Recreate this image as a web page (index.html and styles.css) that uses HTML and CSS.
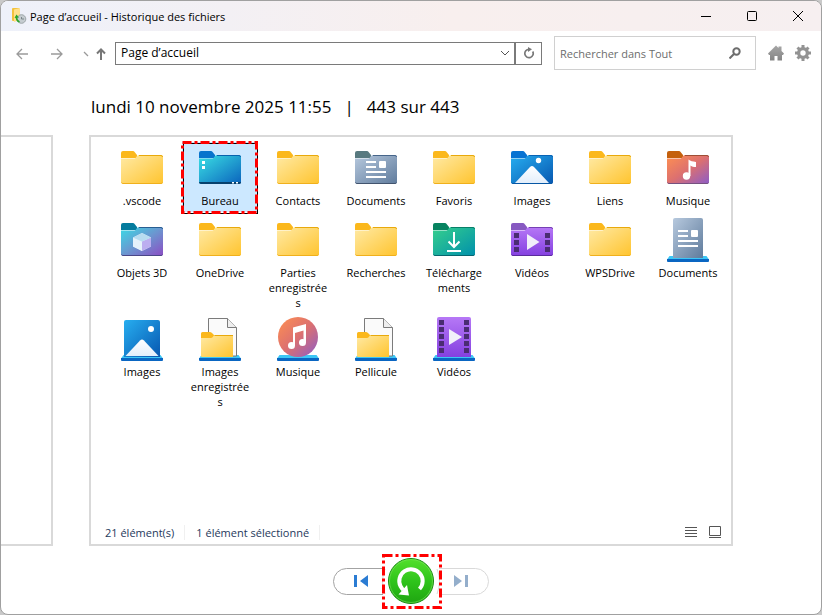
FILE: index.html
```html
<!DOCTYPE html>
<html lang="fr">
<head>
<meta charset="utf-8">
<meta name="viewport" content="width=device-width, initial-scale=1">
<title>Page d'accueil - Historique des fichiers</title>
<link rel="stylesheet" href="styles.css">
</head>
<body>
<svg class="defs" aria-hidden="true">
  <defs>
    <linearGradient id="g-yellow" x1="0" y1="0" x2="1" y2="1"><stop offset="0" stop-color="#ffeaa6"/><stop offset="1" stop-color="#ffc42e"/></linearGradient>
    <linearGradient id="g-desk" x1="0" y1="0" x2="1" y2="1"><stop offset="0" stop-color="#3be0e4"/><stop offset="1" stop-color="#0a63bd"/></linearGradient>
    <linearGradient id="g-slate" x1="0" y1="0" x2="1" y2="1"><stop offset="0" stop-color="#b7c9de"/><stop offset="1" stop-color="#5f7b9c"/></linearGradient>
    <linearGradient id="g-blue" x1="0" y1="0" x2="1" y2="1"><stop offset="0" stop-color="#27aef0"/><stop offset="1" stop-color="#0757b0"/></linearGradient>
    <linearGradient id="g-music" x1="0" y1="0" x2="1" y2="1"><stop offset="0" stop-color="#ff9050"/><stop offset=".5" stop-color="#dc7070"/><stop offset="1" stop-color="#8c5cc8"/></linearGradient>
    <linearGradient id="g-3d" x1="0" y1="0" x2="1" y2="1"><stop offset="0" stop-color="#38dce6"/><stop offset=".5" stop-color="#6b97d0"/><stop offset="1" stop-color="#8c4cc4"/></linearGradient>
    <linearGradient id="g-green" x1="0" y1="0" x2="1" y2="1"><stop offset="0" stop-color="#36d08c"/><stop offset="1" stop-color="#0090ac"/></linearGradient>
    <linearGradient id="g-violet" x1="0" y1="0" x2="0" y2="1"><stop offset="0" stop-color="#b678f6"/><stop offset="1" stop-color="#8440e0"/></linearGradient>
    <linearGradient id="g-white" x1="0" y1="0" x2="0" y2="1"><stop offset="0" stop-color="#fff"/><stop offset="1" stop-color="#e2eefb"/></linearGradient>
    <linearGradient id="g-go" x1="0" y1="0" x2="0" y2="1"><stop offset="0" stop-color="#53e02c"/><stop offset=".5" stop-color="#2fc41b"/><stop offset="1" stop-color="#1fa511"/></linearGradient>
    <linearGradient id="g-gray" x1="0" y1="0" x2="0" y2="1"><stop offset="0" stop-color="#a6a6a6"/><stop offset="1" stop-color="#858585"/></linearGradient>

    <path id="tab" d="M3 14V9a2 2 0 0 1 2-2h9c1.500 0 2.300.4 3 1.500L19 11v3z"/>
    <path id="front" d="M3 14.500h12.500c1.500 0 2-.5 2.800-1.500s1.200-2 2.700-2H43a2 2 0 0 1 2 2v25a2 2 0 0 1-2 2H5a2 2 0 0 1-2-2z"/>
    <path id="rim" d="M21 11.500h22a1.500 1.500 0 0 1 1.500 1.500" fill="none"/>
    <path id="foot" d="M3.500 38.500q.5 1 1.500 1h38q1 0 1.500-1" fill="none"/>
    <g id="base"><path d="M5.500 40h37L45 43.500v.5H3v-.5z" fill="#3cc6f5"/><path d="M3 43h42v2a1 1 0 0 1-1 1H4a1 1 0 0 1-1-1z" fill="#0a66c2"/></g>

    <symbol id="i-folder" viewBox="0 0 48 48">
      <use href="#tab" fill="#fbb81c"/><use href="#front" fill="url(#g-yellow)"/><use href="#rim" stroke="#e8a90c"/><use href="#foot" stroke="#f0b01c"/>
    </symbol>
    <symbol id="i-desk" viewBox="0 0 48 48">
      <use href="#tab" fill="#0873cc"/><use href="#front" fill="url(#g-desk)"/><use href="#rim" stroke="#0863ad"/>
      <path d="M3 38h42a2 2 0 0 1-2 2H5a2 2 0 0 1-2-2z" fill="#07416d"/>
      <path d="M6 17h3v3H6zM6 22h3v3H6zM36 38h2v1.500h-2zM40 38h2v1.500h-2z" fill="#fff"/>
    </symbol>
    <symbol id="i-docs" viewBox="0 0 48 48">
      <use href="#tab" fill="#58797f"/><use href="#front" fill="url(#g-slate)"/><use href="#rim" stroke="#46658a"/><use href="#foot" stroke="#42546e"/>
      <path d="M14 17h10v2H14zM14 22h10v2H14zM14 27h20v2H14zM14 32h20v2H14z" fill="#fff"/><rect x="27" y="17" width="7" height="7" rx="1" fill="#fff"/>
    </symbol>
    <symbol id="i-pics" viewBox="0 0 48 48">
      <use href="#tab" fill="#0873d2"/><use href="#front" fill="url(#g-blue)"/><use href="#rim" stroke="#0863b5"/>
      <path d="M6.500 39.500 22 23q2-2 4 0l15.500 16.500z" fill="url(#g-white)"/><circle cx="30.500" cy="16.500" r="2.700" fill="#fff"/><use href="#foot" stroke="#0757a4"/>
    </symbol>
    <symbol id="i-music" viewBox="0 0 48 48">
      <use href="#tab" fill="#c4600c"/><use href="#front" fill="url(#g-music)"/><use href="#rim" stroke="#9e4e35"/><use href="#foot" stroke="#76517f"/>
      <circle cx="22.500" cy="32" r="3.700" fill="#fff"/><path d="M24.500 15.500c2 1.500 4 2 7.500 2.500v5c-2.500 0-4-.5-5.500-1.500V32h-2z" fill="#fff"/>
    </symbol>
    <symbol id="i-3d" viewBox="0 0 48 48">
      <use href="#tab" fill="#057c9e"/><use href="#front" fill="url(#g-3d)"/><use href="#rim" stroke="#285e92"/><use href="#foot" stroke="#4a4787"/>
      <path d="m24 17 9 4.500v9L24 35l-9-4.500v-9z" fill="#d7eefa"/><path d="m24 25.500 9-4v9L24 35z" fill="#bcaef0"/><path d="m15 21.500 9 4V35l-9-4.500z" fill="#e5f2fb"/><path d="m24 17 9 4.500-9 4-9-4z" fill="#b8dcf0"/>
    </symbol>
    <symbol id="i-down" viewBox="0 0 48 48">
      <use href="#tab" fill="#078360"/><use href="#front" fill="url(#g-green)"/><use href="#rim" stroke="#087f68"/><use href="#foot" stroke="#08666f"/>
      <path d="M24 16v14M18.500 25.500 24 31l5.500-5.500M17 35h14" stroke="#fff" stroke-width="2" fill="none"/>
    </symbol>
    <symbol id="i-video" viewBox="0 0 48 48">
      <use href="#tab" fill="#8759c1"/><use href="#front" fill="url(#g-violet)"/><use href="#rim" stroke="#7640b4"/><use href="#foot" stroke="#5a2c9c"/>
      <path d="M6 17h5v5H6zM6 24h5v5H6zM6 31h5v5H6zM37 17h5v5h-5zM37 24h5v5h-5zM37 31h5v5h-5z" fill="#4a2c72"/>
      <path d="M19 18v16l12.500-8z" fill="#f1effa"/>
    </symbol>
    <symbol id="i-libdocs" viewBox="0 0 48 48">
      <use href="#base"/><path d="M9 42V4a2 2 0 0 1 2-2h26a2 2 0 0 1 2 2v38z" fill="url(#g-slate)"/>
      <path d="M14 14h10v2H14zM14 19h10v2H14zM14 24h20v2H14zM14 29h20v2H14z" fill="#fff"/><rect x="27" y="14" width="7" height="7" rx="1" fill="#fff"/>
    </symbol>
    <symbol id="i-libpics" viewBox="0 0 48 48">
      <use href="#base"/><path d="M6 42V7a2 2 0 0 1 2-2h32a2 2 0 0 1 2 2v35z" fill="url(#g-blue)"/>
      <path d="M7.500 41 22 25.500q2-2 4 0L40.500 41z" fill="url(#g-white)"/><circle cx="33" cy="14" r="3" fill="#fff"/>
    </symbol>
    <symbol id="i-libfile" viewBox="0 0 48 48">
      <use href="#base"/><path d="M12.500 3.500h19l9 9v28.500h-28z" fill="#fafafa" stroke="#7b7b7b"/><path d="M31.500 3.500v9h9" fill="#eee" stroke="#7b7b7b"/>
      <path d="M5 24v-5.500A1.500 1.500 0 0 1 6.500 17H14q1.500 0 2.500 1.500L18 20v4z" fill="#fbb81c"/><path d="M5 23h10q1.500 0 2.500-2 .5-1 1.500-1h18v22H6a1 1 0 0 1-1-1z" fill="url(#g-yellow)"/><path d="M18.500 20.500H37" stroke="#e8a90c"/>
    </symbol>
    <symbol id="i-libmusic" viewBox="0 0 48 48">
      <use href="#base"/><circle cx="24" cy="22" r="20" fill="url(#g-music)"/>
      <circle cx="17.500" cy="30.500" r="3.500" fill="#fff"/><circle cx="28.500" cy="27.500" r="3.500" fill="#fff"/><path d="M19 12.500 32 9v18.500h-2.500V15.500L21 18v12.500h-2z" fill="#fff"/>
    </symbol>
    <symbol id="i-libvideo" viewBox="0 0 48 48">
      <use href="#base"/><path d="M7 42V4a2 2 0 0 1 2-2h30a2 2 0 0 1 2 2v38z" fill="url(#g-violet)"/>
      <path d="M9 5h5v5H9zM9 12h5v5H9zM9 19h5v5H9zM9 26h5v5H9zM9 33h5v5H9zM34 5h5v5h-5zM34 12h5v5h-5zM34 19h5v5h-5zM34 26h5v5h-5zM34 33h5v5h-5z" fill="#4a2c72"/>
      <path d="M19 14v16l13-8z" fill="#f1effa"/>
    </symbol>
  </defs>
</svg>

<div class="window">
  <header class="titlebar">
    <svg class="app-icon" viewBox="0 0 16 16" aria-hidden="true"><path d="M1 1q0-1 1-1h6v13H2q-1 0-1-1z" fill="#f3c23c"/><path d="M3 1.500 9 0v12l-6 2z" fill="#ffe08a"/><circle cx="10.500" cy="11" r="4.300" fill="#c5ccd0" stroke="#9da5a8"/><path d="M10.500 9v2H13" stroke="#7b868a" fill="none"/><path d="M5.500 8.500C5 12 6.500 13 8.500 14" stroke="#2aa52a" stroke-width="1.500" fill="none"/><path d="m3.500 10 2-3.500L8 9.500z" fill="#2aa52a"/></svg>
    <h1 class="title">Page d’accueil - Historique des fichiers</h1>
    <button class="caption" aria-label="Réduire"><svg viewBox="0 0 12 12"><path d="M1 6.500h10"/></svg></button>
    <button class="caption" aria-label="Agrandir"><svg viewBox="0 0 12 12"><rect x="1.500" y="1.500" width="9" height="9" rx="1"/></svg></button>
    <button class="caption" aria-label="Fermer"><svg viewBox="0 0 12 12"><path d="m1 1 10 10M11 1 1 11"/></svg></button>
  </header>

  <nav class="toolbar" aria-label="Navigation">
    <div class="history">
      <button class="nav" aria-label="Précédent"><svg viewBox="0 0 12 12"><path d="M12 6H1M6 1 1 6l5 5" stroke="#9b9b9b" stroke-width="1.300"/></svg></button>
      <button class="nav" aria-label="Suivant"><svg viewBox="0 0 12 12"><path d="M0 6h11M6 1l5 5-5 5" stroke="#9b9b9b" stroke-width="1.300"/></svg></button>
      <button class="nav recent" aria-label="Emplacements récents"><svg viewBox="0 0 6 6"><path d="m1 1 4 4" stroke="#999" stroke-width="1.300"/></svg></button>
      <button class="nav up" aria-label="Monter"><svg viewBox="0 0 12 12"><path d="M6 12V1.500M2 5.500l4-4 4 4" stroke="#777" stroke-width="2"/></svg></button>
    </div>
    <div class="address">
      <input class="path" type="text" aria-label="Adresse" value="Page d’accueil">
      <button class="drop" aria-label="Emplacements précédents"><svg viewBox="0 0 10 6"><path d="m1 1 4 4 4-4"/></svg></button>
    </div>
    <button class="refresh" aria-label="Actualiser"><svg viewBox="0 0 12 12"><path d="M9.700 4.500A4.200 4.200 0 1 1 6 2.300" stroke="#777" stroke-width="1.700" fill="none"/><path d="M5 0v5l4-2.700z" fill="#777"/></svg></button>
    <div class="search">
      <input class="query" type="search" aria-label="Rechercher dans Tout" placeholder="Rechercher dans Tout">
      <button class="lens" aria-label="Rechercher"><svg viewBox="0 0 12 12"><circle cx="7.500" cy="4.500" r="3.200"/><path d="M5 7 .5 11.500"/></svg></button>
    </div>
    <button class="tool" aria-label="Accueil"><svg viewBox="0 0 16 16"><path d="M8 .5 10.500 3V1.500h3V6L16 8.500 15 10h-1v5.500H9.500V11h-3v4.500H2V10H1L0 8.500z" fill="url(#g-gray)"/></svg></button>
    <button class="tool" aria-label="Paramètres"><svg viewBox="0 0 16 16"><g stroke="#939393" stroke-width="3"><path d="M8 0v16M0 8h16M2.500 2.500l11 11M13.500 2.500l-11 11"/></g><circle cx="8" cy="8" r="6" fill="#939393"/><circle cx="8" cy="8" r="2.700" fill="#fff"/></svg></button>
  </nav>

  <main class="stage">
    <h2 class="stamp"><span>lundi 10 novembre 2025 11:55</span><span>|</span><span>443 sur 443</span></h2>
    <div class="panel previous"></div>
    <section class="panel current">
      <ul class="files">
        <li class="file"><svg><use href="#i-folder"/></svg><span>.vscode</span></li>
        <li class="file selected"><svg><use href="#i-desk"/></svg><span>Bureau</span><svg class="mark" aria-hidden="true"><rect class="under" x="1.500" y="1.500" width="100%" height="100%"/><rect class="dash" x=".5" y=".5" width="100%" height="100%"/></svg></li>
        <li class="file"><svg><use href="#i-folder"/></svg><span>Contacts</span></li>
        <li class="file"><svg><use href="#i-docs"/></svg><span>Documents</span></li>
        <li class="file"><svg><use href="#i-folder"/></svg><span>Favoris</span></li>
        <li class="file"><svg><use href="#i-pics"/></svg><span>Images</span></li>
        <li class="file"><svg><use href="#i-folder"/></svg><span>Liens</span></li>
        <li class="file"><svg><use href="#i-music"/></svg><span>Musique</span></li>
        <li class="file"><svg><use href="#i-3d"/></svg><span>Objets 3D</span></li>
        <li class="file"><svg><use href="#i-folder"/></svg><span>OneDrive</span></li>
        <li class="file"><svg><use href="#i-folder"/></svg><span>Parties enregistrée<wbr>s</span></li>
        <li class="file"><svg><use href="#i-folder"/></svg><span>Recherches</span></li>
        <li class="file"><svg><use href="#i-down"/></svg><span>Télécharge<wbr>ments</span></li>
        <li class="file"><svg><use href="#i-video"/></svg><span>Vidéos</span></li>
        <li class="file"><svg><use href="#i-folder"/></svg><span>WPSDrive</span></li>
        <li class="file"><svg><use href="#i-libdocs"/></svg><span>Documents</span></li>
        <li class="file"><svg><use href="#i-libpics"/></svg><span>Images</span></li>
        <li class="file"><svg><use href="#i-libfile"/></svg><span>Images enregistrée<wbr>s</span></li>
        <li class="file"><svg><use href="#i-libmusic"/></svg><span>Musique</span></li>
        <li class="file"><svg><use href="#i-libfile"/></svg><span>Pellicule</span></li>
        <li class="file"><svg><use href="#i-libvideo"/></svg><span>Vidéos</span></li>
      </ul>
      <footer class="status">
        <span class="count">21 élément(s)</span>
        <span class="count">1 élément sélectionné</span>
        <button class="view" aria-label="Détails"><svg viewBox="0 0 12 12"><path d="M0 1.500h12M0 4.500h12M0 7.500h12M0 10.500h12"/></svg></button>
        <button class="view" aria-label="Grandes icônes"><svg viewBox="0 0 12 12"><path d="M.5.5h11v9H.5zM0 11.500h12"/></svg></button>
      </footer>
    </section>
  </main>

  <div class="controls">
    <button class="step" aria-label="Version précédente"><svg viewBox="0 0 54 27"><path d="M50 .5H13.500a13 13 0 0 0 0 26H50" fill="none" stroke="#a3a3a3"/><path d="M52 1q-5 12 0 25" fill="none" stroke="#d4d4d4"/><path d="M21 7h3v12h-3zM35 7v12l-8-6z" fill="#2b7cd3"/></svg></button>
    <button class="restore" aria-label="Restaurer"><svg viewBox="0 0 48 48"><circle cx="24" cy="24" r="22.500" fill="url(#g-go)" stroke="#15890e"/><circle cx="24" cy="24" r="21.500" fill="none" stroke="#7be65c" stroke-opacity=".6"/><path d="M32.500 32A11.700 11.700 0 1 0 13.500 29.200L16 33" fill="none" stroke="#fff" stroke-width="4"/><path d="m11.500 37.500 10.500 1-2-10.500z" fill="#fff"/></svg><svg class="mark" aria-hidden="true"><rect class="dash" x=".5" y=".5" width="100%" height="100%"/></svg></button>
    <button class="step" aria-label="Version suivante"><svg viewBox="0 0 54 27"><path d="M4 .5h36.500a13 13 0 0 1 0 26H4M2 1q5 12 0 25" fill="none" stroke="#d9d9d9"/><path d="M33 7h-3v12h3zM19 7v12l8-6z" fill="#94aecb"/></svg></button>
  </div>
</div>
</body>
</html>
```
FILE: styles.css
```css
* { box-sizing: border-box; }

body {
  margin: 0;
  background: #c9c9c9;
  color: #000;
  font: 11px/15px "Open Sans", "Noto Sans", sans-serif;
}

button,
input {
  margin: 0;
  padding: 0;
  border: 0;
  background: none;
  color: inherit;
  font: inherit;
}

button {
  display: flex;
  align-items: center;
  justify-content: center;
}

h1, h2 { margin: 0; font: inherit; }

svg { display: block; }

.defs { position: absolute; width: 0; height: 0; }

.window {
  display: flex;
  flex-direction: column;
  min-height: 100vh;
  border: 1px solid #a0a0a0;
  border-radius: 8px;
  background: #fff;
  overflow: hidden;
}

/* Title bar */
.titlebar {
  display: flex;
  align-items: center;
  height: 30px;
  padding-left: 10px;
  background: linear-gradient(90deg, #eef1fa, #f8efee 55%, #f6eff0);
}

.app-icon { width: 16px; height: 16px; }
.title { flex: 1; padding-left: 3px; }
.caption { width: 46px; height: 30px; }
.caption svg { width: 12px; height: 12px; fill: none; stroke: #000; }

/* Toolbar */
.toolbar {
  display: flex;
  align-items: center;
  height: 44px;
  padding-right: 10px;
}

.history {
  display: flex;
  align-items: center;
  width: 114px;
  padding: 2px 0 0 9px;
}

.nav { width: 24px; height: 24px; margin-right: 11px; }
.nav svg { width: 12px; height: 12px; fill: none; }
.recent { width: 11px; margin-right: 0; }
.recent svg { width: 6px; height: 6px; }
.up { width: 20px; margin-right: 0; }

.address {
  display: flex;
  flex: 1;
  height: 23px;
  border: 1px solid #7a7a7a;
}

.path { flex: 1; min-width: 0; padding: 0 0 1px 5px; font-size: 12px; }
.drop { width: 18px; }
.drop svg { width: 10px; height: 6px; fill: none; stroke: #555; }
.refresh { width: 27px; height: 23px; border: 1px solid #7a7a7a; }
.refresh svg { width: 12px; height: 12px; }

.search {
  display: flex;
  width: 202px;
  height: 34px;
  margin: 0 12px;
  border: 1px solid #d0d0d0;
}

.query { flex: 1; min-width: 0; padding-left: 5px; appearance: none; }
.query::placeholder { color: #6d6d6d; opacity: 1; }
.lens { width: 41px; }
.lens svg { width: 12px; height: 12px; fill: none; stroke: #6d6d6d; stroke-width: 2; }
.tool { width: 16px; height: 16px; }
.tool + .tool { margin-left: 11px; }
.tool svg { width: 16px; height: 16px; }

/* Backup browser */
.stage {
  display: grid;
  flex: 1;
  grid-template: 60px 1fr / 52px 1fr 52px;
  column-gap: 36px;
}

.stamp {
  display: flex;
  grid-column: 2;
  gap: 13px;
  align-items: center;
  align-self: start;
  padding: 20px 0 0 2px;
  font-size: 17px;
  line-height: 24px;
}

.panel { grid-row: 2; border: 2px solid #d9d9d9; }
.previous { grid-column: 1; border-left: 0; }
.current { display: flex; flex-direction: column; grid-column: 2; }

.files {
  display: grid;
  flex: 1;
  grid-template-columns: repeat(auto-fill, 76px);
  gap: 2px;
  align-content: start;
  margin: 0;
  padding: 5px 0 0 13px;
  list-style: none;
}

.file {
  position: relative;
  display: flex;
  flex-direction: column;
  align-items: center;
  gap: 1px;
  min-height: 70px;
  padding: 2px 0 1px;
  text-align: center;
}

.file > svg { flex: none; width: 48px; height: 48px; }
.file span { width: 62px; }
.selected { background: #cce8ff; }

.file > .mark,
.mark {
  position: absolute;
  top: 0;
  left: 0;
  width: calc(100% - 2px);
  height: 100%;
  overflow: visible;
  fill: none;
}

.dash { stroke: #f00; stroke-width: 3; stroke-dasharray: 9 3 3 3; }
.under { stroke: #000; stroke-width: 1; }

.status {
  display: flex;
  align-items: center;
  height: 24px;
  padding: 0 10px 0 14px;
  color: #1e395b;
}

.count { padding-right: 10px; margin-right: 11px; border-right: 1px solid #f0f0f0; }
.count:last-of-type { margin-right: auto; }
.view { width: 12px; height: 12px; }
.view + .view { margin-left: 12px; }
.view svg { width: 12px; height: 12px; fill: none; stroke: #555; }

/* Version controls */
.controls {
  display: flex;
  align-items: center;
  justify-content: center;
  height: 68px;
  padding-top: 2px;
}

.step svg { width: 54px; height: 27px; }
.restore { position: relative; width: 48px; height: 48px; }
.restore > svg { width: 48px; height: 48px; }
.restore > .mark { top: -2px; left: -4px; width: 57px; height: 52px; }
```
